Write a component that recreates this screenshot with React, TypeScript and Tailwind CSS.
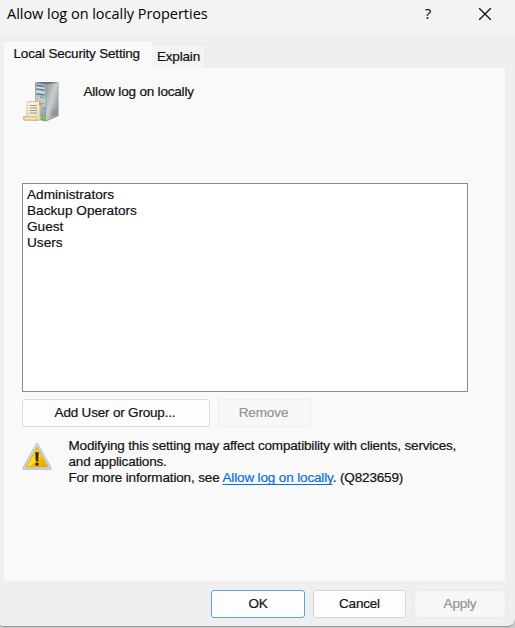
import React from "react";

const users = ["Administrators", "Backup Operators", "Guest", "Users"];

function ServerIcon() {
  return (
    <svg width="38" height="42" viewBox="0 0 38 42" className="block">
      <defs>
        <linearGradient id="side" x1="0" y1="0" x2="1" y2="1">
          <stop offset="0" stopColor="#8d9496" />
          <stop offset="0.45" stopColor="#c9cfd0" />
          <stop offset="1" stopColor="#747d80" />
        </linearGradient>
        <linearGradient id="front" x1="0" y1="0" x2="0" y2="1">
          <stop offset="0" stopColor="#a3b3bc" />
          <stop offset="0.5" stopColor="#c2d0d8" />
          <stop offset="1" stopColor="#7e9098" />
        </linearGradient>
        <linearGradient id="paper" x1="0" y1="0" x2="1" y2="1">
          <stop offset="0" stopColor="#fffbea" />
          <stop offset="1" stopColor="#ead7a4" />
        </linearGradient>
      </defs>
      <path d="M13 1.5 L22 1 L36.5 1.5 L36.5 35 L24 40.5 L13 38 Z" fill="#8a9194" />
      <path d="M13.5 2 L23.5 3.5 L23.5 40 L13.5 37 Z" fill="url(#front)" />
      <path d="M24 3.5 L36 2 L36 34.5 L24 40 Z" fill="url(#side)" />
      <path d="M14 1.5 L23 1 L36 1.6 L24 3 Z" fill="#68716f" />
      <path d="M14.5 4.5 L22.5 5.5 M14.5 8 L22.5 9 M14.5 13 L22.5 14" stroke="#6a7f8c" strokeWidth="1.3" />
      <path d="M14.5 6.3 L22.5 7.3 M14.5 10.3 L22.5 11.3" stroke="#dce7ed" strokeWidth="1.2" />
      <path d="M18 16 L22 16.5 M18 22 L22 22.5 M20 27 L23 27.4" stroke="#75878f" strokeWidth="1" />
      <path d="M29 33 L34.5 30 M29 35 L34.5 32 M29 31 L34.5 28" stroke="#7b8488" strokeWidth="0.8" />
      <rect x="20" y="35.5" width="4" height="3" rx="1" fill="#67dc12" />
      <path d="M5 22 Q5 20.5 7 20.5 L19 20.5 Q21 21 20 24.5 L18 25 L18 36 L19.5 37 L17 39.5 L2 39 Q0.5 37.5 1.5 35.5 L5 35.5 Z" fill="url(#paper)" stroke="#cbb98a" strokeWidth="0.8" />
      <path d="M2 35.8 L14 36 Q16 37 14.5 39 L3 39 Q0.5 38.5 2 35.8 Z" fill="#f4e6bc" stroke="#c0aa72" strokeWidth="0.8" />
      <path d="M17 21 Q20.5 20.5 20 24.5 L17 24.5 Z" fill="#b99d66" />
      <path d="M7.5 24.5 H15 M7.5 27 H15 M7.5 29.5 H15 M7.5 32 H15" stroke="#a09ba8" strokeWidth="1" />
    </svg>
  );
}

function WarningIcon() {
  return (
    <svg width="30" height="28" viewBox="0 0 30 28" className="block">
      <defs>
        <linearGradient id="warn" x1="0" y1="0" x2="1" y2="1">
          <stop offset="0.2" stopColor="#f5c400" />
          <stop offset="0.55" stopColor="#ffe11a" />
          <stop offset="0.6" stopColor="#f6b900" />
          <stop offset="1" stopColor="#eda000" />
        </linearGradient>
      </defs>
      <path d="M15 2 L28 25.2 H2 Z" fill="#b5b7bb" stroke="#b5b7bb" strokeWidth="3.2" strokeLinejoin="round" />
      <path d="M15 2 L27.7 24.7 H2.3 Z" fill="#d2d3d5" stroke="#d2d3d5" strokeWidth="2" strokeLinejoin="round" />
      <path d="M15 4.5 L25.8 23.8 H4.2 Z" fill="url(#warn)" stroke="#d9a411" strokeWidth="0.8" strokeLinejoin="round" />
      <path d="M13.2 9.5 Q15 8.6 16.8 9.5 L16.2 18.5 H13.8 Z" fill="#2d2c20" />
      <rect x="13.4" y="19.8" width="3.2" height="3" rx="1" fill="#2d2c20" />
    </svg>
  );
}

export default function App() {
  return (
    <div className="h-[628px] w-[515px] overflow-hidden bg-[#c9c9c9] font-['Liberation_Sans',Arial,sans-serif] text-[13.5px] leading-4 tracking-[-0.19px] text-[#111] [-webkit-text-stroke:0.2px]">
      <div className="flex h-[627px] flex-col rounded-br-[8px] rounded-bl-[3px] border-b border-[#999] bg-[#efefef]">
        <header className="flex h-[34px] shrink-0 items-start bg-[#f3f3f3] pl-[7px] font-['Open_Sans',sans-serif] text-black [-webkit-text-stroke:0px]">
          <h1 className="w-[417px] pt-[4px] text-[14.5px] leading-5 tracking-[-0.03px]">Allow log on locally Properties</h1>
          <button className="w-[8px] pt-[3px] text-[15px] leading-5">?</button>
          <svg width="14" height="14" viewBox="0 0 14 14" className="mt-[7px] ml-[46px]">
            <path d="M1.2 1.2 L12.8 12.8 M12.8 1.2 L1.2 12.8" stroke="#111" strokeWidth="1.3" />
          </svg>
        </header>

        <nav className="flex h-[34px] shrink-0 items-end pl-[4px]">
          <div className="mt-[8px] h-[26px] w-[148px] bg-[#f9f9f9] pt-[4px] pl-[9.5px]">Local Security Setting</div>
          <div className="h-[24px] w-[54px] border-t border-r border-[#e8e8e8] bg-[#f3f3f3] pt-[4px] pl-[5px]">Explain</div>
        </nav>

        <main className="ml-[4px] h-[513px] w-[501px] shrink-0 bg-[#f9f9f9] pl-[18px]">
          <div className="flex h-[115px] items-start pt-[13px]">
            <ServerIcon />
            <p className="mt-[3px] ml-[23.5px]">Allow log on locally</p>
          </div>
          <ul className="h-[209px] w-[446px] border border-[#868a94] bg-white pt-[3px] pl-[4px] text-[13.65px] leading-[16px] tracking-[0px]">
            {users.map((u) => (
              <li key={u}>{u}</li>
            ))}
          </ul>
          <div className="mt-[7px] flex gap-[8px]">
            <button className="h-[28px] w-[188px] rounded-[3px] border border-[#dcdcdc] bg-[#fdfdfd] pr-[2px]">Add User or Group...</button>
            <button className="h-[28px] w-[93px] rounded-[3px] border border-[#eeeeee] bg-[#f8f8f8] pr-[2px] tracking-[-0.1px] text-[#929292]">Remove</button>
          </div>
          <div className="mt-[11px] flex items-start">
            <div className="mt-[5px]"><WarningIcon /></div>
            <div className="ml-[16.5px] leading-[16.2px] whitespace-nowrap">
              <p className="tracking-[-0.18px]">Modifying this setting may affect compatibility with clients, services,</p>
              <p>and applications.</p>
              <p className="tracking-[-0.14px]">
                For more information, see <a className="text-[#0870d8] underline underline-offset-2">Allow log on locally</a>. (Q823659)
              </p>
            </div>
          </div>
        </main>

        <footer className="flex gap-[8px] pt-[9px] pl-[211px]">
          <button className="h-[28px] w-[94px] rounded-[3px] border border-[#5ba3dc] bg-[#fdfdfd]">OK</button>
          <button className="h-[28px] w-[93px] rounded-[3px] border border-[#d6d6d6] bg-[#fdfdfd]">Cancel</button>
          <button className="h-[28px] w-[92px] rounded-[3px] border border-[#ebebeb] bg-[#f7f7f7] text-[#929292]">Apply</button>
        </footer>
      </div>
    </div>
  );
}
